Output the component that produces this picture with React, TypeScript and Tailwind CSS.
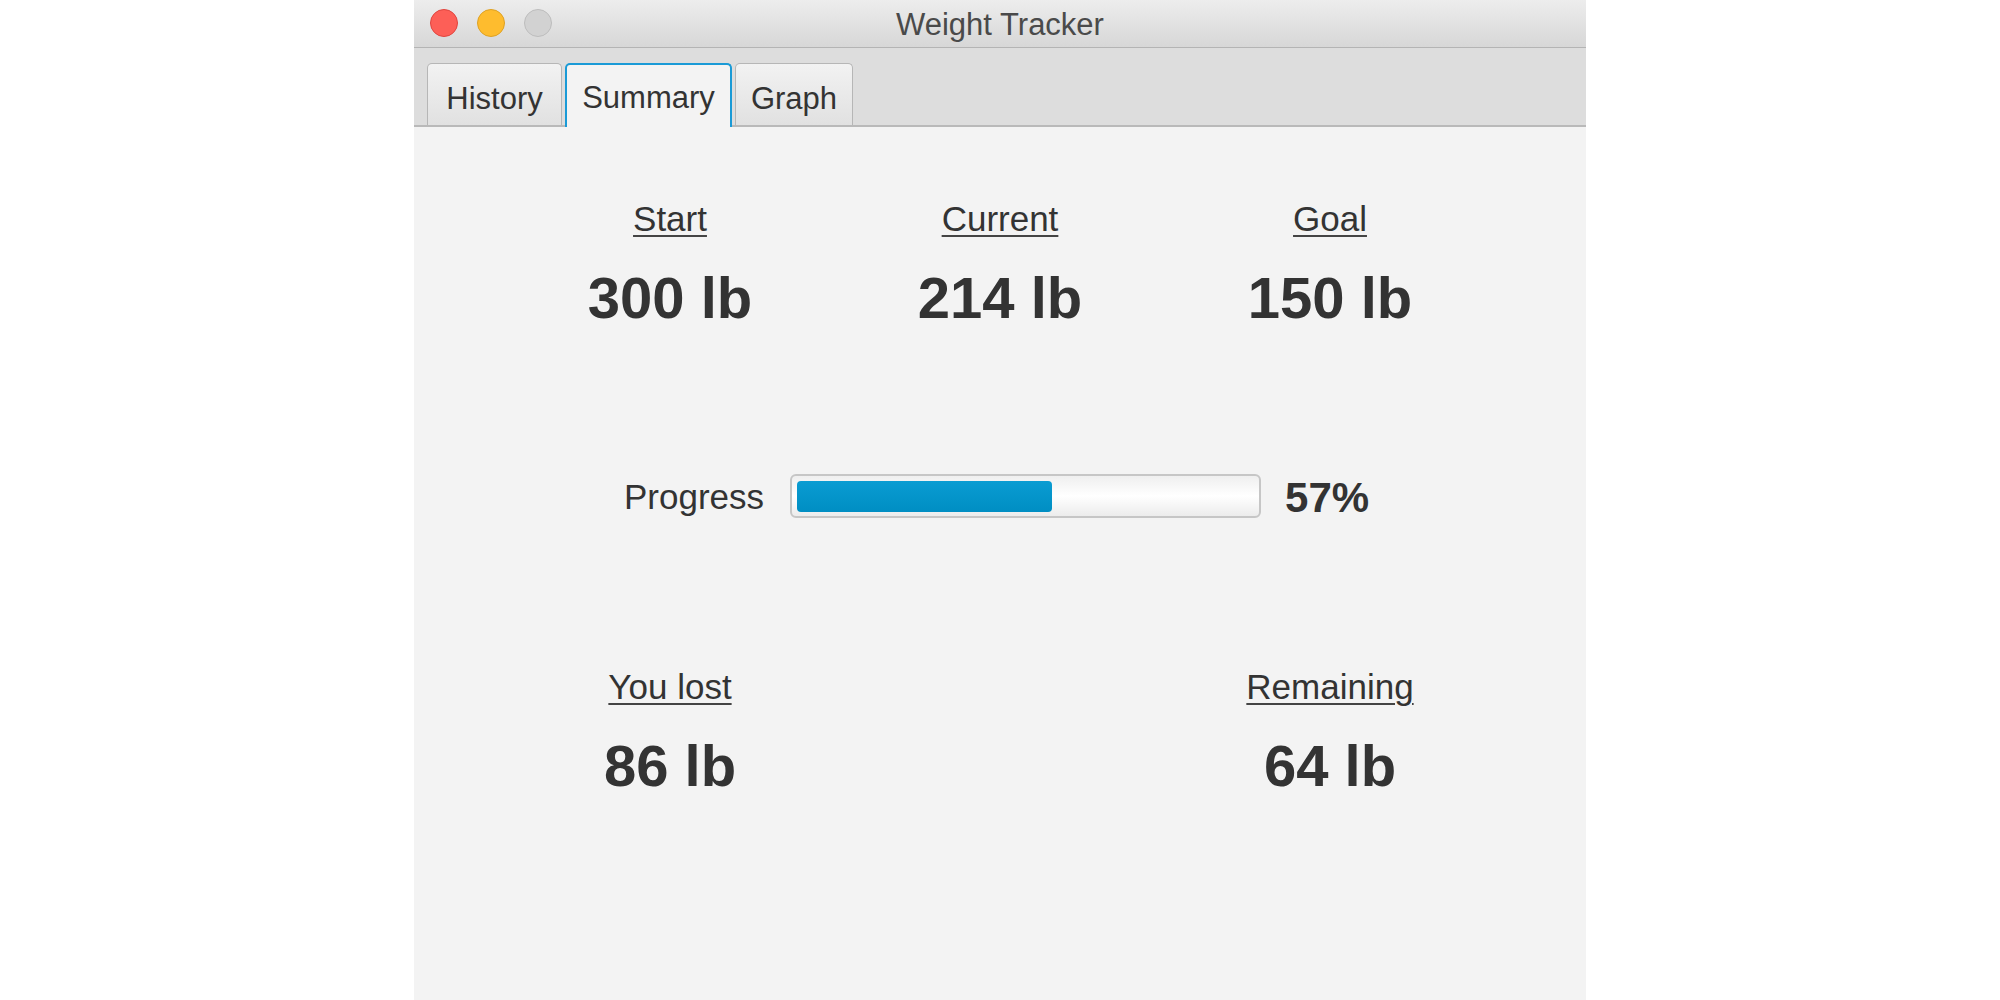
import React from "react";

const font = { fontFamily: '"Liberation Sans", Arial, sans-serif' };

const tabs = [
  { name: "History", width: "w-[135px]", active: false },
  { name: "Summary", width: "w-[167px]", active: true },
  { name: "Graph", width: "w-[118px]", active: false },
];

function Stat({ label, value }: { label: string; value: string }) {
  return (
    <div className="flex flex-col items-center">
      <span className="text-[35px] leading-[35px] text-[#333] underline decoration-2 underline-offset-[4px] decoration-[#444]">
        {label}
      </span>
      <span className="mt-[33px] text-[58px] leading-[58px] font-bold text-[#333]">
        {value}
      </span>
    </div>
  );
}

export default function App() {
  return (
    <div className="w-full h-[1000px] bg-white flex justify-center overflow-hidden" style={font}>
      <div className="w-[1172px] h-[1000px] flex flex-col bg-[#f3f3f3]">
        {/* title bar */}
        <div className="relative h-[48px] shrink-0 flex items-center justify-center bg-gradient-to-b from-[#ededed] to-[#d7d7d7] border-b border-[#b4b4b4]">
          <div className="absolute left-[16px] top-[9px] flex gap-[19px]">
            <span className="w-[28px] h-[28px] rounded-full bg-[#fd5f57] border border-[#e0443e]" />
            <span className="w-[28px] h-[28px] rounded-full bg-[#febc2e] border border-[#dea123]" />
            <span className="w-[28px] h-[28px] rounded-full bg-[#d2d2d2] border border-[#bdbdbd]" />
          </div>
          <span className="mt-[2px] text-[31px] leading-[31px] text-[#4a4a4a]">Weight Tracker</span>
        </div>

        {/* tab bar */}
        <div className="h-[79px] shrink-0 bg-[#dddddd] border-b-2 border-[#b9b9b9] flex items-end pl-[13px] gap-[3px]">
          {tabs.map((t) =>
            t.active ? (
              <div
                key={t.name}
                className={`${t.width} h-[64px] -mb-[2px] rounded-t-[5px] border-2 border-b-0 border-[#1a9ad6] bg-[#f3f3f3] flex justify-center pt-[17px]`}
              >
                <span className="text-[31px] leading-[31px] text-[#333]">{t.name}</span>
              </div>
            ) : (
              <div
                key={t.name}
                className={`${t.width} h-[62px] rounded-t-[5px] border border-b-0 border-[#b6b6b6] bg-gradient-to-b from-[#f2f2f2] to-[#e1e1e1] flex justify-center pt-[19px]`}
              >
                <span className="text-[31px] leading-[31px] text-[#333]">{t.name}</span>
              </div>
            )
          )}
        </div>

        {/* summary content */}
        <div className="flex flex-col pt-[74px]">
          <div className="w-[990px] mx-auto grid grid-cols-3">
            <Stat label="Start" value="300 lb" />
            <Stat label="Current" value="214 lb" />
            <Stat label="Goal" value="150 lb" />
          </div>

          <div className="mt-[147px] ml-[210px] flex items-center h-[44px]">
            <span className="text-[35px] leading-[35px] text-[#333]">Progress</span>
            <div className="ml-[26px] w-[471px] h-[44px] rounded-[6px] border-2 border-[#c6c6c6] bg-gradient-to-b from-[#efefef] via-white to-[#ececec] px-[5px] py-[5px] flex items-center">
              <div className="w-[255px] h-[31px] rounded-[4px] bg-gradient-to-b from-[#0a9cd2] to-[#008ec3]" />
            </div>
            <span className="ml-[24px] mt-[4px] text-[42px] leading-[42px] font-bold text-[#333]">57%</span>
          </div>

          <div className="mt-[151px] w-[990px] mx-auto grid grid-cols-3">
            <Stat label="You lost" value="86 lb" />
            <div />
            <Stat label="Remaining" value="64 lb" />
          </div>
        </div>
      </div>
    </div>
  );
}
